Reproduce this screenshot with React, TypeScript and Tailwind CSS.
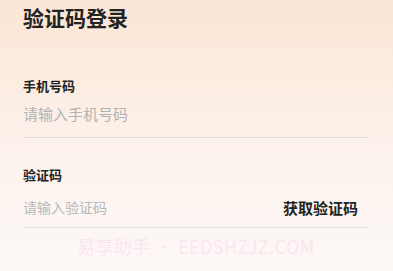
import React from "react";

export default function App() {
  return (
    <div className="w-[393px] h-[271px] overflow-hidden bg-linear-to-b from-[#fbe5d4] via-[#fcf1ea] to-[#fdf9f7] pl-[23px] pr-[24px] font-['Noto_Sans_CJK_SC','Noto_Sans',sans-serif] text-[#222]">
      <div className="mt-[7px] h-[21px] text-[21px] leading-[21px] font-bold">验证码登录</div>

      <div className="mt-[51px] h-[13px] text-[13px] leading-[13px] font-bold">手机号码</div>
      <div className="flex h-[42px] pb-[3px] items-center border-b border-[#dcdcdc] box-content">
        <input
          className="w-full bg-transparent text-[15px] leading-[15px] outline-none placeholder:text-[#b2b2b2]"
          placeholder="请输入手机号码"
        />
      </div>

      <div className="mt-[30px] h-[13px] text-[13px] leading-[13px] font-bold">验证码</div>
      <div className="flex h-[40px] pt-[6px] items-center justify-between border-b border-[#dcdcdc] box-content">
        <input
          className="min-w-0 flex-1 bg-transparent text-[14px] leading-[14px] outline-none placeholder:text-[#b8b8b8]"
          placeholder="请输入验证码"
        />
        <div className="text-[15px] leading-[15px] font-bold mr-[11px]">获取验证码</div>
      </div>

      <div className="mt-[9px] text-center text-[18px] leading-[18px] tracking-[0.4px] text-[#fce5f1]">
        易享助手 • EEDSHZJZ.COM
      </div>
    </div>
  );
}
